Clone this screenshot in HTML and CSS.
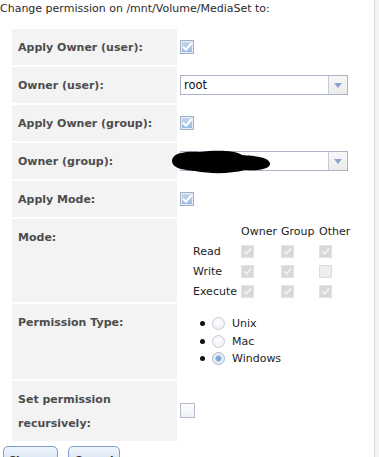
FILE: index.html
```html
<!DOCTYPE html>
<html>
<head>
<meta charset="utf-8">
<link rel="stylesheet" href="styles.css">
</head>
<body>
<div class="page">
  <div class="title">Change permission on /mnt/Volume/MediaSet to:</div>
  <div class="form">
    <div class="label">Apply Owner (user):</div>
    <div class="value">
      <span class="cb on"><svg viewBox="0 0 14 14" width="14" height="14"><path d="M3.5 7.2 L6 9.8 L11 3.8" fill="none" stroke="#fff" stroke-width="2.2" stroke-linecap="round" stroke-linejoin="round"/></svg></span>
    </div>

    <div class="label">Owner (user):</div>
    <div class="value">
      <div class="select"><span class="sel-text">root</span><span class="sel-btn"><svg width="8" height="5" viewBox="0 0 8 5"><path d="M0 0 H8 L4 5 Z" fill="#8ea3c9"/></svg></span></div>
    </div>

    <div class="label">Apply Owner (group):</div>
    <div class="value">
      <span class="cb on"><svg viewBox="0 0 14 14" width="14" height="14"><path d="M3.5 7.2 L6 9.8 L11 3.8" fill="none" stroke="#fff" stroke-width="2.2" stroke-linecap="round" stroke-linejoin="round"/></svg></span>
    </div>

    <div class="label">Owner (group):</div>
    <div class="value">
      <div class="select"><span class="sel-text"></span><span class="sel-btn"><svg width="8" height="5" viewBox="0 0 8 5"><path d="M0 0 H8 L4 5 Z" fill="#8ea3c9"/></svg></span></div>
      <svg class="redact" width="100" height="24" viewBox="170 152 100 24"><path d="M172,163 C172,155 185,153 200,154 C215,152 235,152 242,157 C255,158 268,159 270,165 C271,171 258,173 245,172 C230,176 210,176 195,173 C180,172 172,169 172,163 Z" fill="#000"/></svg>
    </div>

    <div class="label">Apply Mode:</div>
    <div class="value">
      <span class="cb on"><svg viewBox="0 0 14 14" width="14" height="14"><path d="M3.5 7.2 L6 9.8 L11 3.8" fill="none" stroke="#fff" stroke-width="2.2" stroke-linecap="round" stroke-linejoin="round"/></svg></span>
    </div>

    <div class="label">Mode:</div>
    <div class="value">
      <div class="mode">
        <span></span><span>Owner</span><span>Group</span><span>Other</span>
        <span>Read</span>
        <span class="dcb"><svg viewBox="0 0 13 13" width="13" height="13"><path d="M3.5 6.8 L5.6 8.8 L9.6 4" fill="none" stroke="#f2f2f2" stroke-width="1.8" stroke-linecap="round" stroke-linejoin="round"/></svg></span>
        <span class="dcb"><svg viewBox="0 0 13 13" width="13" height="13"><path d="M3.5 6.8 L5.6 8.8 L9.6 4" fill="none" stroke="#f2f2f2" stroke-width="1.8" stroke-linecap="round" stroke-linejoin="round"/></svg></span>
        <span class="dcb"><svg viewBox="0 0 13 13" width="13" height="13"><path d="M3.5 6.8 L5.6 8.8 L9.6 4" fill="none" stroke="#f2f2f2" stroke-width="1.8" stroke-linecap="round" stroke-linejoin="round"/></svg></span>
        <span>Write</span>
        <span class="dcb"><svg viewBox="0 0 13 13" width="13" height="13"><path d="M3.5 6.8 L5.6 8.8 L9.6 4" fill="none" stroke="#f2f2f2" stroke-width="1.8" stroke-linecap="round" stroke-linejoin="round"/></svg></span>
        <span class="dcb"><svg viewBox="0 0 13 13" width="13" height="13"><path d="M3.5 6.8 L5.6 8.8 L9.6 4" fill="none" stroke="#f2f2f2" stroke-width="1.8" stroke-linecap="round" stroke-linejoin="round"/></svg></span>
        <span class="dcb off"></span>
        <span>Execute</span>
        <span class="dcb"><svg viewBox="0 0 13 13" width="13" height="13"><path d="M3.5 6.8 L5.6 8.8 L9.6 4" fill="none" stroke="#f2f2f2" stroke-width="1.8" stroke-linecap="round" stroke-linejoin="round"/></svg></span>
        <span class="dcb"><svg viewBox="0 0 13 13" width="13" height="13"><path d="M3.5 6.8 L5.6 8.8 L9.6 4" fill="none" stroke="#f2f2f2" stroke-width="1.8" stroke-linecap="round" stroke-linejoin="round"/></svg></span>
        <span class="dcb"><svg viewBox="0 0 13 13" width="13" height="13"><path d="M3.5 6.8 L5.6 8.8 L9.6 4" fill="none" stroke="#f2f2f2" stroke-width="1.8" stroke-linecap="round" stroke-linejoin="round"/></svg></span>
      </div>
    </div>

    <div class="label">Permission Type:</div>
    <div class="value">
      <ul class="radios">
        <li><span class="dot"></span><span class="radio"></span><span>Unix</span></li>
        <li><span class="dot"></span><span class="radio"></span><span>Mac</span></li>
        <li><span class="dot"></span><span class="radio checked"></span><span>Windows</span></li>
      </ul>
    </div>

    <div class="label">Set permission recursively:</div>
    <div class="value">
      <span class="cb off"></span>
    </div>
  </div>
  <div class="buttons">
    <button class="btn btn-change">Change</button>
    <button class="btn btn-cancel">Cancel</button>
  </div>
</div>
</body>
</html>
```

FILE: styles.css
```css
html, body {
  margin: 0;
  padding: 0;
  height: 100%;
  overflow: hidden;
  background: #f3f3f3;
}
body {
  font-family: "DejaVu Sans", Verdana, sans-serif;
  font-size: 11px;
  color: #222;
}
.page {
  width: 375px;
  height: 100%;
  background: #fff;
  border-right: 1px solid #dadada;
  box-sizing: border-box;
}
.title {
  height: 18px;
  line-height: 18px;
  color: #2a2a2a;
  white-space: nowrap;
}
.form {
  margin: 11px 0 0 12px;
  display: grid;
  grid-template-columns: 165px 1fr;
  row-gap: 2px;
  column-gap: 1px;
}
.label {
  background: #f3f3f3;
  font-weight: bold;
  color: #4d4d4d;
  line-height: 24px;
  padding: 7px 6px 5px;
  min-height: 24px;
}
.value {
  display: flex;
  align-items: center;
  padding-left: 2px;
  position: relative;
}
.cb {
  width: 14px;
  height: 14px;
  box-sizing: border-box;
  display: inline-block;
}
.cb svg { display: block; }
.cb.on {
  border: 1px solid #a2afc4;
  background: linear-gradient(#c8dbf1, #93b6e0);
  box-shadow: inset 0 0 0 1px #e4eefa;
}
.cb.on svg { margin: -1px; }
.cb.off {
  width: 15px;
  height: 15px;
  border: 1px solid #b4bccb;
  background: linear-gradient(#fdfdfd, #eef0f3);
}
.select {
  width: 168px;
  height: 20px;
  box-sizing: border-box;
  border: 1px solid #aab3c5;
  display: flex;
  background: #fff;
}
.sel-text {
  flex: 1;
  line-height: 18px;
  padding-left: 3px;
  color: #111;
  font-size: 11.5px;
}
.sel-btn {
  width: 18px;
  border-left: 1px solid #c4cad6;
  background: linear-gradient(#f7f7f7, #ececec);
  display: flex;
  align-items: center;
  justify-content: center;
}
.redact {
  position: absolute;
  left: -8px;
  top: 50%;
  margin-top: -11px;
}
.mode {
  display: grid;
  grid-template-columns: 46px 38px 36px 30px;
  grid-auto-rows: 20px;
  column-gap: 2px;
  margin: 2px 0 1px 13px;
  align-items: center;
  color: #222;
}
.dcb {
  width: 13px;
  height: 13px;
  box-sizing: border-box;
  border: 1px solid #e2e2e2;
  background: #d8d8d8;
  display: block;
}
.dcb svg { display: block; margin: -1px; }
.dcb.off {
  background: #ededed;
  border-color: #dcdcdc;
}
.radios {
  list-style: none;
  margin: 11px 0;
  padding: 0 0 0 20px;
}
.radios li {
  height: 17.5px;
  display: flex;
  align-items: center;
}
.dot {
  width: 5px;
  height: 5px;
  border-radius: 50%;
  background: #111;
  margin-right: 7px;
}
.radio {
  width: 13px;
  height: 13px;
  box-sizing: border-box;
  border-radius: 50%;
  border: 1px solid #c3cad5;
  background: radial-gradient(circle at 50% 40%, #ffffff, #e9ecf1);
  margin-right: 7px;
}
.radio.checked {
  border-color: #9fb2cc;
  background: radial-gradient(circle, #6f9fd3 0, #8cb2de 2.5px, #dfe9f5 3.5px, #f3f6fa 6px);
}
.buttons {
  display: flex;
  gap: 10px;
  margin: 5px 0 0 3px;
}
.btn {
  font-family: "DejaVu Sans", Verdana, sans-serif;
  font-size: 10.5px;
  font-weight: bold;
  color: #333;
  border: 1px solid #7f9dc8;
  border-radius: 5px;
  background: linear-gradient(#eef4fc, #c7d8ee);
  padding: 6px 0;
  line-height: 14px;
  text-align: center;
}
.btn-change { width: 55px; }
.btn-cancel { width: 52px; }
```
